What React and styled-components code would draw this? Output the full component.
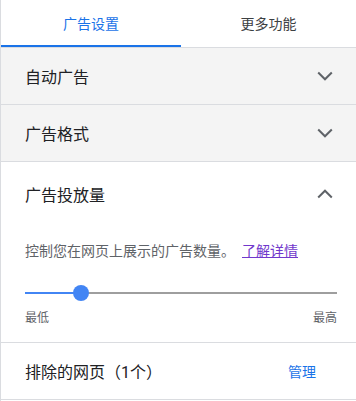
import React from "react";
import styled, { createGlobalStyle } from "styled-components";

const GlobalStyle = createGlobalStyle`
	html, body {
		margin: 0;
		padding: 0;
		background: #fff;
	}
	body {
		font-family: Roboto, "Noto Sans CJK SC", sans-serif;
		color: #202124;
	}
`;

const Chevron = ({ up }) => (
	<Icon viewBox="0 0 16 10" up={up ? 1 : 0}>
		<polyline points="1.2,1.5 8,8.3 14.8,1.5" />
	</Icon>
);

const Section = ({ title, open, gray }) => (
	<Row gray={gray}>
		<RowHeader open={open}>
			<RowTitle>{title}</RowTitle>
			<Chevron up={open} />
		</RowHeader>
	</Row>
);

const App = () => {
	const level = 18;
	return (
		<Panel>
			<GlobalStyle />
			<TabBar>
				<Tab active>广告设置</Tab>
				<Tab>更多功能</Tab>
			</TabBar>
			<Section title="自动广告" gray />
			<Section title="广告格式" gray />
			<Row>
				<RowHeader open>
					<RowTitle>广告投放量</RowTitle>
					<Chevron up />
				</RowHeader>
				<Body>
					<Description>
						控制您在网页上展示的广告数量。<Link href="#">了解详情</Link>
					</Description>
					<Slider>
						<Track>
							<Fill style={{ width: `${level}%` }} />
						</Track>
						<Thumb style={{ left: `${level}%` }} />
					</Slider>
					<Labels>
						<span>最低</span>
						<span>最高</span>
					</Labels>
				</Body>
			</Row>
			<Row>
				<RowHeader>
					<RowTitle>排除的网页（1个）</RowTitle>
					<Manage>管理</Manage>
				</RowHeader>
			</Row>
		</Panel>
	);
};

export default App;

const Panel = styled.div`
	width: 355px;
	height: 401px;
	border-left: 1px solid #dadce0;
	background: #fff;
	overflow: hidden;
`;
const TabBar = styled.div`
	display: flex;
	border-bottom: 1px solid #dadce0;
`;
const Tab = styled.div`
	width: ${({ active }) => (active ? "180px" : "auto")};
	flex: ${({ active }) => (active ? "none" : "1")};
	height: 47px;
	display: flex;
	align-items: center;
	justify-content: center;
	font-size: 14px;
	color: ${({ active }) => (active ? "#1a73e8" : "#3c4043")};
	box-shadow: ${({ active }) => (active ? "inset 0 -2px 0 #1a73e8" : "none")};
	padding-bottom: 1px;
	box-sizing: border-box;
`;
const Row = styled.section`
	background: ${({ gray }) => (gray ? "#f4f4f4" : "#fff")};
	border-bottom: 1px solid #dadce0;
`;
const RowHeader = styled.div`
	height: ${({ open }) => (open ? "64px" : "56px")};
	display: flex;
	align-items: center;
	justify-content: space-between;
	padding: 0 23px 0 24px;
`;
const RowTitle = styled.h2`
	margin: 0;
	font-size: 16px;
	font-weight: 400;
	color: #202124;
`;
const Icon = styled.svg`
	width: 16px;
	height: 10px;
	fill: none;
	stroke: #5f6368;
	stroke-width: 2;
	transform: ${({ up }) => (up ? "rotate(180deg)" : "none")};
`;
const Body = styled.div`
	padding: 15px 19px 16px 24px;
`;
const Description = styled.p`
	margin: 0;
	font-size: 14px;
	line-height: 20px;
	color: #5f6368;
`;
const Link = styled.a`
	margin-left: 7px;
	color: #7138cc;
	text-decoration: underline;
`;
const Slider = styled.div`
	position: relative;
	height: 16px;
	margin-top: 24px;
	display: flex;
	align-items: center;
`;
const Track = styled.div`
	width: 100%;
	height: 2px;
	background: #9e9e9e;
`;
const Fill = styled.div`
	height: 100%;
	background: #4285f4;
`;
const Thumb = styled.div`
	position: absolute;
	top: 0;
	width: 16px;
	height: 16px;
	margin-left: -8px;
	border-radius: 50%;
	background: #4285f4;
`;
const Labels = styled.div`
	display: flex;
	justify-content: space-between;
	margin-top: 9px;
	font-size: 12px;
	line-height: 16px;
	color: #5f6368;
`;
const Manage = styled.span`
	font-size: 14px;
	color: #1a73e8;
	margin-right: 17px;
`;
